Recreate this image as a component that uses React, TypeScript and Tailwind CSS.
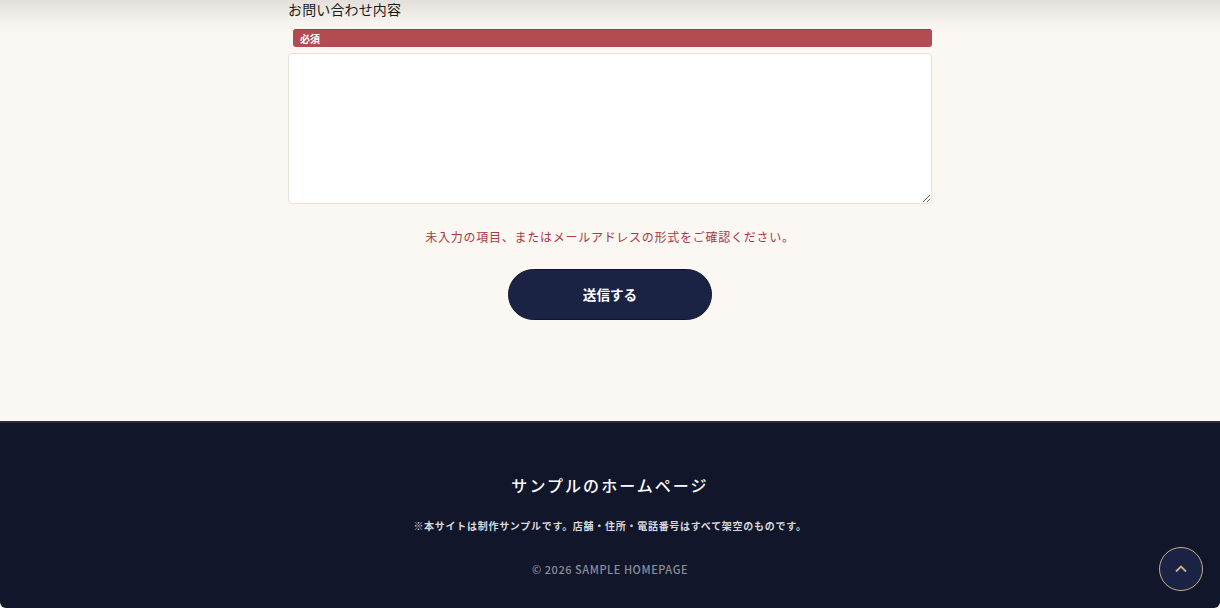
const sans = "font-['Noto_Sans_CJK_JP','Noto_Sans',sans-serif]";

function ContactField() {
  return (
    <div className="mx-auto w-[644px]">
      <label className="block text-[14px] leading-[20px] tracking-[0.01em] text-[#1c1c1c] -translate-y-px">お問い合わせ内容</label>
      <span className="mt-[9px] ml-[5px] block h-[18px] rounded-[3px] border-t border-[#a03f48] bg-[#b44a52] pl-[7px] text-[10px] leading-[17px] font-bold text-white">
        必須
      </span>
      <textarea
        aria-label="お問い合わせ内容"
        className="mt-[6px] block h-[151px] w-full resize-y rounded-[4px] border border-[#e8e4dc] bg-white"
      />
    </div>
  );
}

export default function App() {
  return (
    <div className={`relative flex h-[608px] flex-col overflow-hidden bg-[#fbf7f2] ${sans}`}>
      {/* shadow of the sticky header sitting above the viewport */}
      <div className="pointer-events-none absolute -inset-x-[60px] -top-[20px] h-[20px] bg-white shadow-[0_4px_30px_rgba(0,0,0,0.2)]" />

      <main className="h-[421px] shrink-0">
        <ContactField />
        <p className="mt-[24px] text-center text-[12px] leading-[18px] tracking-[0.74px] text-[#a63a46]">
          未入力の項目、またはメールアドレスの形式をご確認ください。
        </p>
        <div className="mt-[23px] flex justify-center">
          <button className="h-[51px] w-[204px] rounded-full border border-[#0f1428] bg-[#1b2344] text-[13.6px] font-bold text-white">
            送信する
          </button>
        </div>
      </main>

      <footer className="flex flex-1 flex-col items-center rounded-b-[6px] border-t-2 border-[#2a2d38] bg-[#11162b] pt-[50px]">
        <h2 className="text-[16px] leading-[24px] font-medium tracking-[2.05px] text-white">サンプルのホームページ</h2>
        <p className="mt-[21px] text-[10px] leading-[16px] font-bold tracking-[0.72px] text-[#d8d8dc]">
          ※本サイトは制作サンプルです。店舗・住所・電話番号はすべて架空のものです。
        </p>
        <p className="mt-[27px] text-[11px] leading-[16px] font-medium tracking-[0.05em] text-[#8c8e99]">
          © 2026 SAMPLE HOMEPAGE
        </p>
      </footer>

      <button
        aria-label="ページトップへ"
        className="absolute right-[17px] bottom-[17px] flex h-[44px] w-[44px] items-center justify-center rounded-full border-[1.5px] border-[#c9ad84] bg-[#1b2344]"
      >
        <svg width="14" height="14" viewBox="0 0 14 14" fill="none" stroke="#cdb083" strokeWidth="1.8">
          <path d="M2 9.5 L7 4.5 L12 9.5" />
        </svg>
      </button>
    </div>
  );
}
